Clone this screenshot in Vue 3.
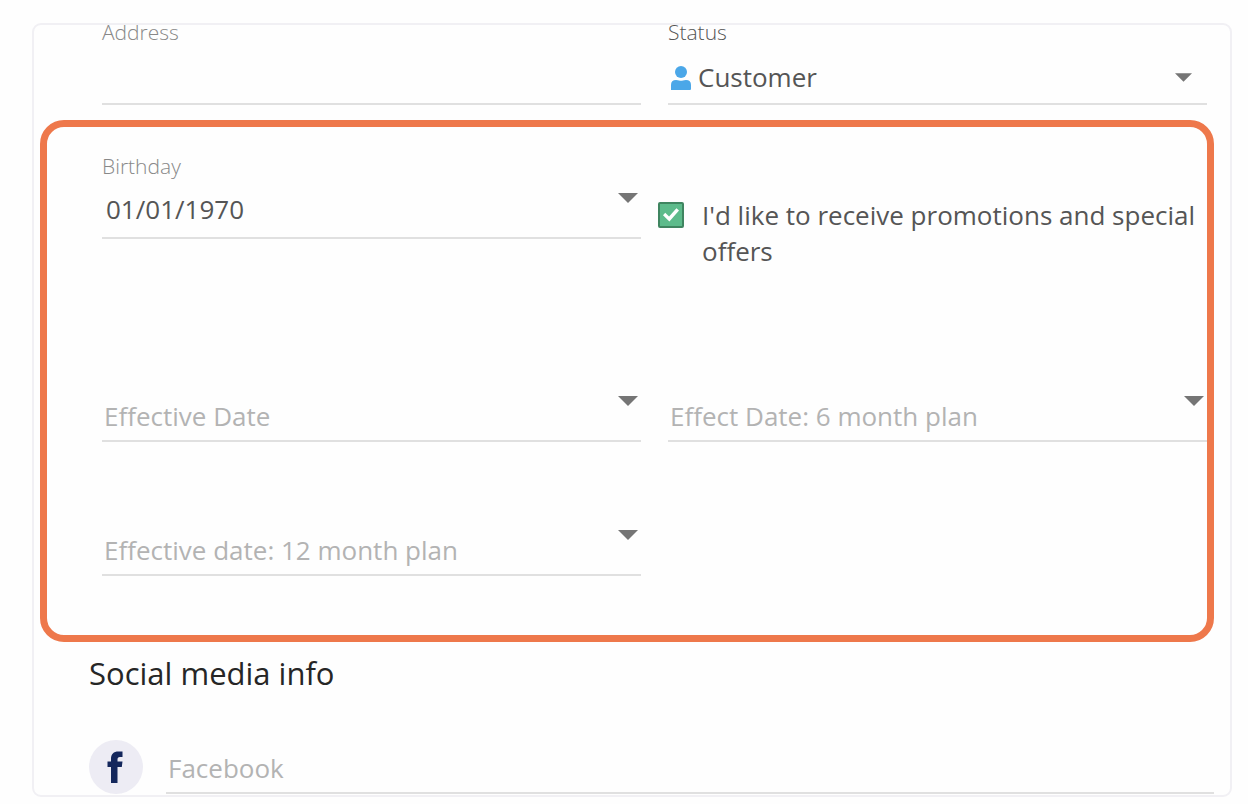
<template>
  <main class="contact-card">
    <!-- Contact basics -->
    <div class="field-grid basics">
      <div class="field">
        <label class="field-label" for="address">Address</label>
        <div class="control">
          <input id="address" v-model="form.address" class="text-input filled" type="text" />
        </div>
      </div>
      <div class="field">
        <label class="field-label dark" for="status">Status</label>
        <div class="control status-control">
          <svg class="person-icon" viewBox="0 0 20 24" fill="currentColor">
            <circle cx="10" cy="6" r="6" />
            <path d="M0 24v-5q0-5 5-5q2 0 3 .5q2 .6 4 0q1-.5 3-.5q5 0 5 5v4q0 1-1 1z" />
          </svg>
          <select id="status" v-model="form.status" class="status-select">
            <option>Customer</option>
            <option>Lead</option>
          </select>
          <svg class="select-caret" viewBox="0 0 20 10" fill="currentColor">
            <path d="M0 0h20L10 10z" />
          </svg>
        </div>
      </div>
    </div>

    <!-- Dates and consent -->
    <section class="highlight">
      <div class="field-grid dates">
        <div class="field">
          <label class="field-label" for="birthday">Birthday</label>
          <div class="control">
            <input id="birthday" v-model="form.birthday" class="text-input filled" type="text" />
            <button class="date-toggle" type="button" aria-label="Pick birthday">
              <svg viewBox="0 0 20 10" fill="currentColor"><path d="M0 0h20L10 10z" /></svg>
            </button>
          </div>
        </div>

        <div class="consent">
          <input id="consent" v-model="form.consent" type="checkbox" class="consent-box" />
          <label for="consent">I'd like to receive promotions and special offers</label>
        </div>

        <div v-for="item in dateFields" :key="item.id" class="field empty">
          <div class="control">
            <input
              :id="item.id"
              v-model="form[item.id]"
              class="text-input"
              type="text"
              :placeholder="item.label"
              :aria-label="item.label"
            />
            <button class="date-toggle" type="button" :aria-label="'Pick ' + item.label">
              <svg viewBox="0 0 20 10" fill="currentColor"><path d="M0 0h20L10 10z" /></svg>
            </button>
          </div>
        </div>
      </div>
    </section>

    <!-- Social -->
    <section class="social">
      <h2>Social media info</h2>
      <div class="social-row">
        <svg class="facebook-icon" viewBox="0 0 54 54">
          <circle cx="27" cy="27" r="27" fill="#edecf4" />
          <path
            fill="#14275c"
            d="M22 43V27h-3.500v-5.500H22V19c0-5 2.500-7.500 7.500-7.500h4V17h-2.500c-2 0-2.500 1-2.500 2.500v2H33.500l-.7 5.500h-4.300v16z"
          />
        </svg>
        <div class="control">
          <input
            v-model="form.facebook"
            class="text-input"
            type="text"
            placeholder="Facebook"
            aria-label="Facebook"
          />
        </div>
      </div>
    </section>
  </main>
</template>

<script setup>
import { reactive } from 'vue'

const dateFields = [
  { id: 'effectiveDate', label: 'Effective Date' },
  { id: 'sixMonthPlan', label: 'Effect Date: 6 month plan' },
  { id: 'twelveMonthPlan', label: 'Effective date: 12 month plan' }
]

const form = reactive({
  address: '',
  status: 'Customer',
  birthday: '01/01/1970',
  consent: true,
  effectiveDate: '',
  sixMonthPlan: '',
  twelveMonthPlan: '',
  facebook: ''
})
</script>

<style>
body {
  background: #fefefe;
}
</style>

<style scoped>
* {
  box-sizing: border-box;
}

.contact-card {
  margin: 23px 16px 7px 32px;
  padding-bottom: 1px;
  border: 2px solid #f1f0f4;
  border-radius: 9px;
  font-family: "Open Sans", "Noto Sans", sans-serif;
  font-size: 26px;
  color: #555;
}

.field-grid {
  display: grid;
  grid-template-columns: 1fr 1fr;
  column-gap: 27px;
}

.basics {
  padding: 0 23px 0 68px;
}

.field-label {
  display: block;
  margin-bottom: 2px;
  font-size: 21px;
  line-height: 14px;
  font-weight: 300;
  color: #888;
}

.field-label.dark {
  color: #555;
}

.field.empty {
  padding-top: 16px;
}

.control {
  display: flex;
  align-items: flex-start;
  height: 64px;
  border-bottom: 2px solid #e0e0e0;
}

.text-input {
  flex: 1;
  min-width: 0;
  height: 62px;
  padding: 14px 0 0 2px;
  border: 0;
  outline: 0;
  background: transparent;
  font: inherit;
  color: inherit;
}

.text-input.filled {
  padding: 6px 0 0 4px;
}

.text-input::placeholder {
  color: #b3b3b3;
  opacity: 1;
}

.status-control {
  display: grid;
  align-items: center;
}

.person-icon,
.status-select,
.select-caret {
  grid-area: 1 / 1;
}

.person-icon {
  width: 20px;
  height: 24px;
  margin: 12px 0 0 3px;
  color: #4ba7e8;
}

.status-select {
  width: 100%;
  height: 62px;
  padding: 10px 40px 0 30px;
  border: 0;
  outline: 0;
  appearance: none;
  background: transparent;
  font: inherit;
  color: inherit;
}

.select-caret {
  justify-self: end;
  width: 17px;
  height: 9px;
  margin: 10px 15px 0 0;
  color: #757575;
  pointer-events: none;
}

.date-toggle {
  display: flex;
  margin: 18px 3px 0 0;
  padding: 0;
  border: 0;
  background: none;
  color: #757575;
  cursor: pointer;
}

.date-toggle svg {
  width: 20px;
  height: 10px;
}

.highlight {
  margin: 15px 16px 0 6px;
  padding: 32px 0 59px 55px;
  border: 7px solid #ee784b;
  border-radius: 24px;
}

.dates {
  row-gap: 54px;
}

.consent {
  display: flex;
  align-items: flex-start;
  gap: 18px;
  margin-left: -10px;
  padding: 38px 0 39px;
  line-height: 36px;
}

.consent-box {
  display: grid;
  place-items: center;
  flex: none;
  width: 26px;
  height: 26px;
  margin: 5px 0 0;
  appearance: none;
  border: 2px solid #3f8560;
  border-radius: 2px;
  background: #5dbb8b;
}

.consent-box:checked::before {
  content: "";
  width: 16px;
  height: 14px;
  background: #fff;
  clip-path: polygon(0 52%, 14% 34%, 38% 60%, 84% 2%, 100% 18%, 40% 96%);
}

.social {
  padding: 11px 16px 0 55px;
}

.social h2 {
  margin: 0;
  font-size: 31px;
  line-height: 40px;
  font-weight: 400;
  color: #262626;
}

.social-row {
  display: flex;
  gap: 23px;
  margin-top: 47px;
}

.facebook-icon {
  flex: none;
  width: 54px;
  height: 54px;
}

.social-row .control {
  flex: 1;
  height: 54px;
}

.social-row .text-input {
  height: 52px;
  padding-top: 4px;
}
</style>
